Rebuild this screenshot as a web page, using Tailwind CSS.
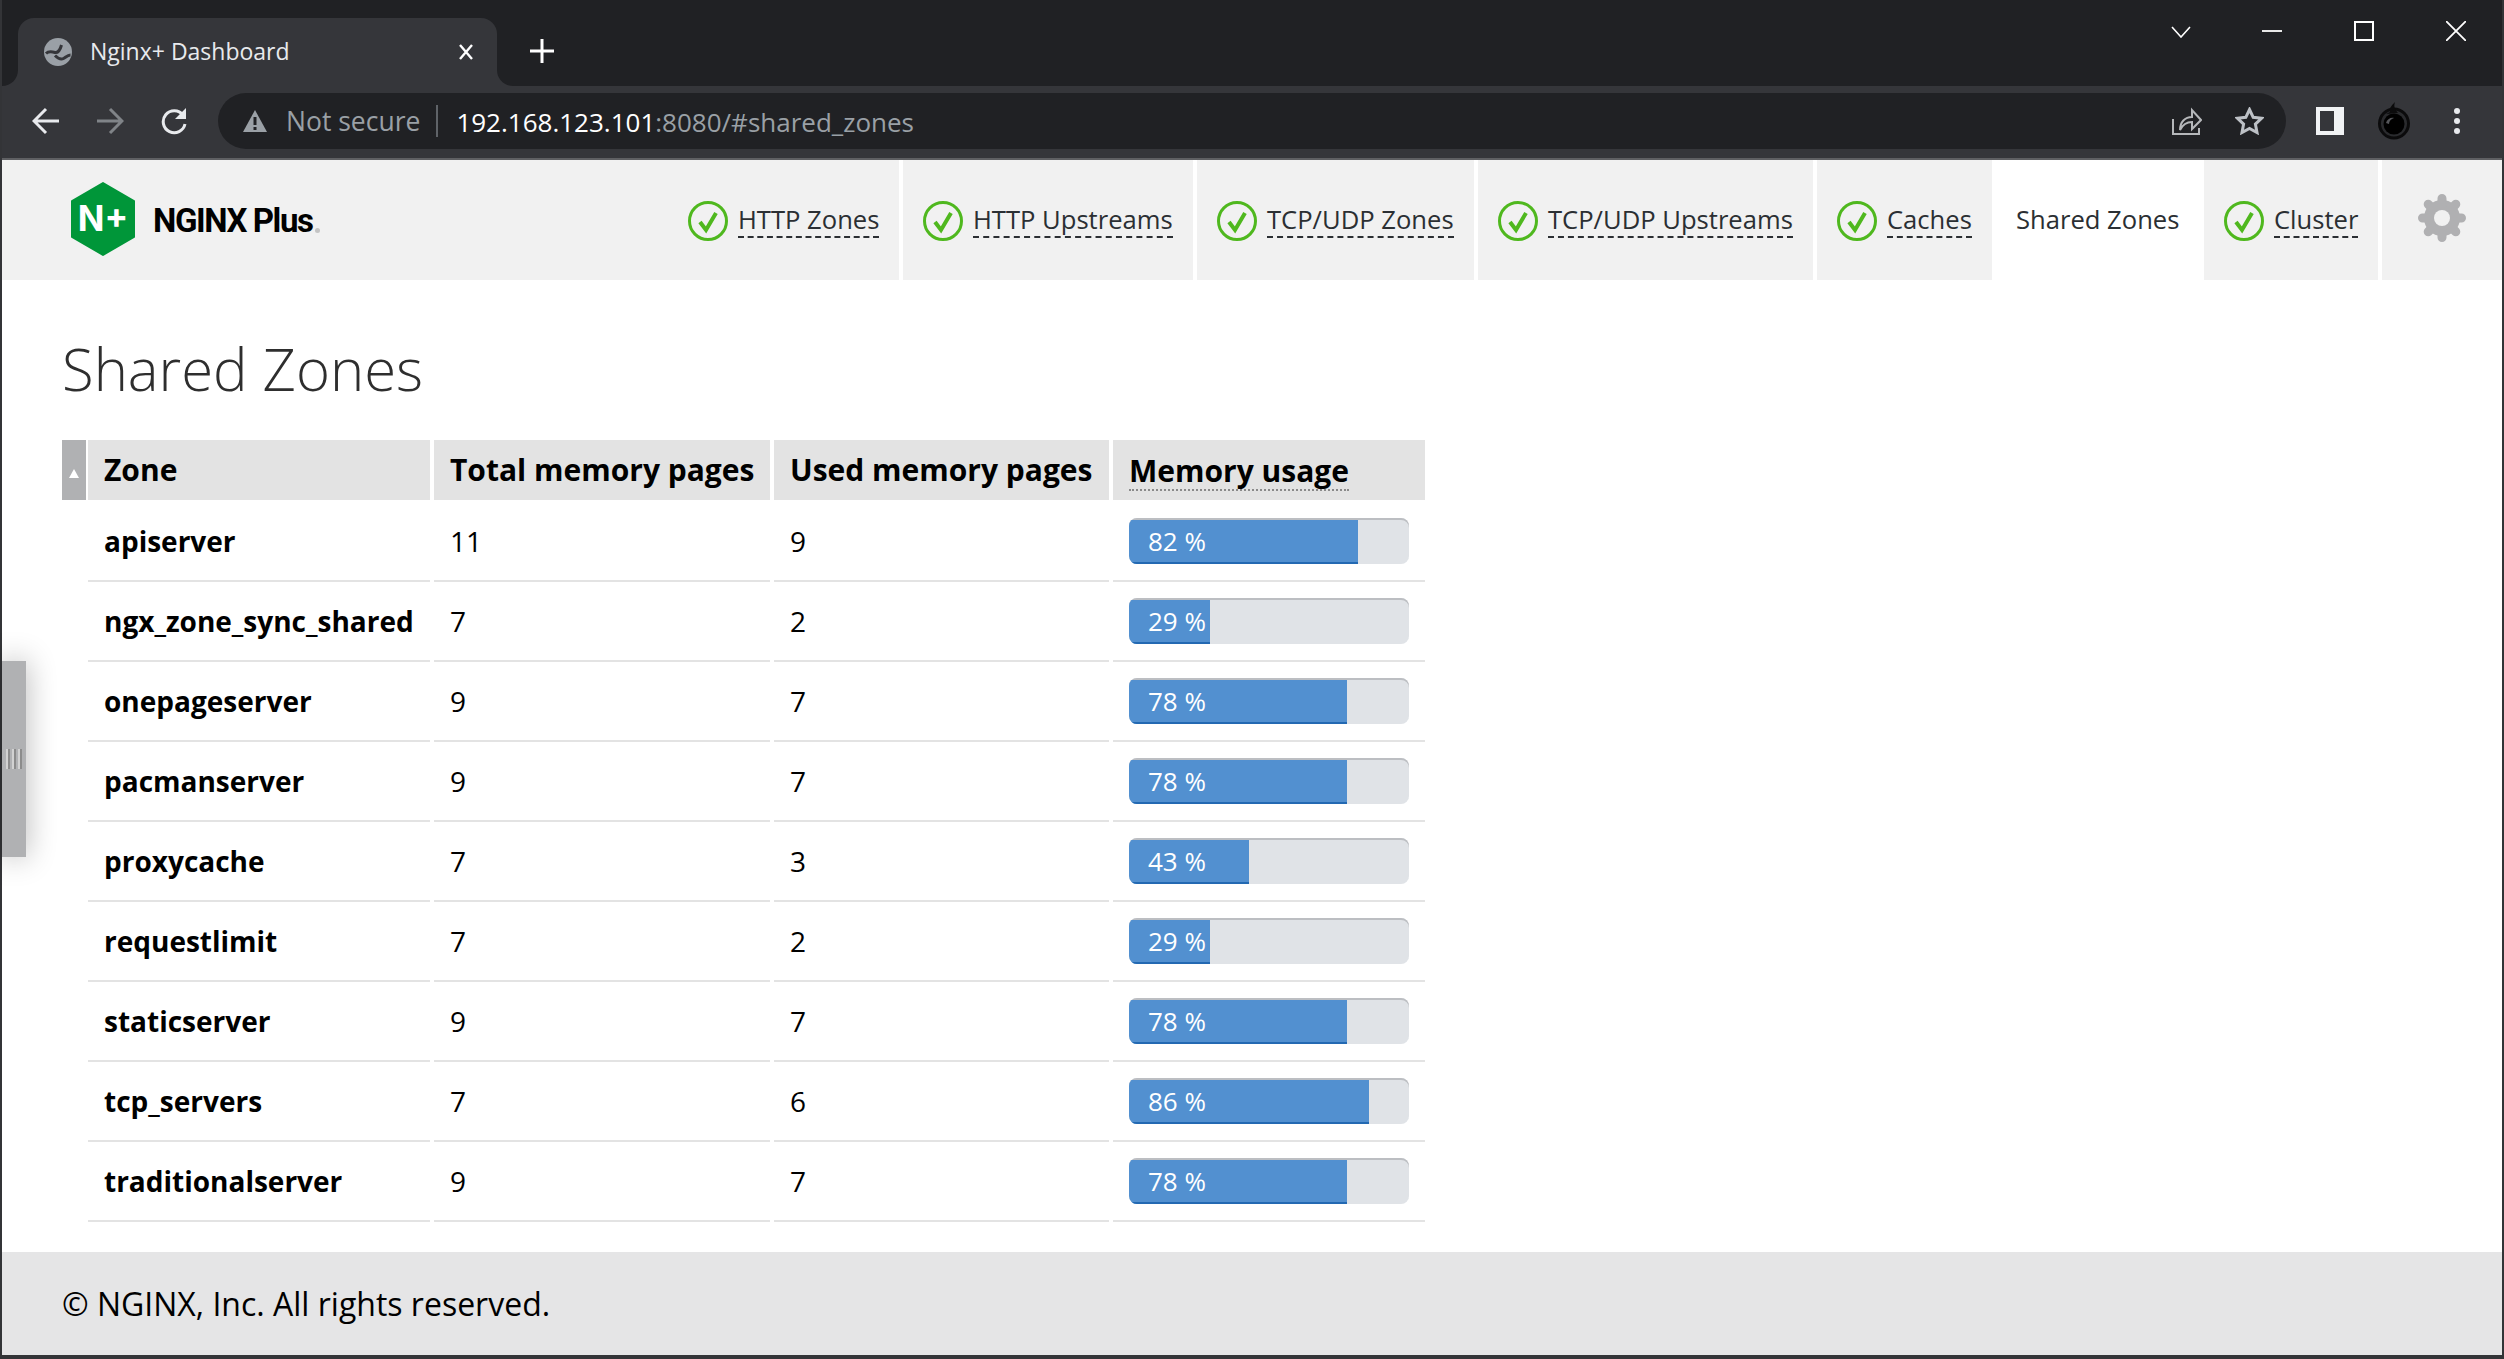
<!DOCTYPE html>
<html lang="en">
<head>
    <meta charset="UTF-8">
    <title>Nginx+ Dashboard</title>
    <script src="https://cdn.jsdelivr.net/npm/@tailwindcss/browser@4"></script>
</head>
<body class="bg-white overflow-hidden font-['Open_Sans',sans-serif]">
<div class="h-[1359px] w-[2504px] flex flex-col border-l-2 border-r-2 border-b-4 border-[#333437] bg-white">

    <!-- tab strip -->
    <div class="h-[86px] shrink-0 bg-[#202124] flex items-end relative">
        <div class="relative ml-4 w-[479px] h-[68px] bg-[#35363a] rounded-t-[16px] flex items-center text-white">
            <svg class="absolute -left-4 bottom-0 w-4 h-4" viewBox="0 0 16 16"><path d="M16 0v16H0C9 16 16 9 16 0z" fill="#35363a"/></svg>
            <svg class="absolute -right-4 bottom-0 w-4 h-4" viewBox="0 0 16 16"><path d="M0 0v16h16C7 16 0 9 0 0z" fill="#35363a"/></svg>
            <svg class="ml-[26px] w-[28px] h-[28px]" viewBox="0 0 28 28">
                <circle cx="14" cy="14" r="14" fill="#9aa0a6"/>
                <path d="M2 15.500c3-3 6-2 9-1 3 .5 5-2 6.500-7.500M11 17.500c3 3 6 4.500 8.500 3 2-1 4-3.500 7-3.500" stroke="#35363a" stroke-width="3" fill="none"/>
            </svg>
            <span class="ml-[18px] pb-[2px] text-[23px] text-[#e8eaed]">Nginx+ Dashboard</span>
            <svg class="ml-auto mr-[23px] w-4 h-4" viewBox="0 0 16 16"><path d="M2 1l12 14M14 1L2 15" stroke="#fff" stroke-width="2.400" fill="none"/></svg>
        </div>
        <svg class="ml-[33px] mb-[23px] w-6 h-6" viewBox="0 0 24 24"><path d="M12 0v24M0 12h24" stroke="#fff" stroke-width="3" fill="none"/></svg>
        <div class="ml-auto self-start pt-[21px] pr-[36px] flex items-start">
            <svg class="mt-[5px] w-5 h-3" viewBox="0 0 20 12"><path d="M1 1l9 10 9-10" stroke="#fff" stroke-width="1.600" fill="none"/></svg>
            <svg class="ml-[71px] w-5 h-5" viewBox="0 0 20 20"><path d="M0 10h20" stroke="#fff" stroke-width="1.800" fill="none"/></svg>
            <svg class="ml-[72px] w-5 h-5" viewBox="0 0 20 20"><rect x="1" y="1" width="18" height="18" stroke="#fff" stroke-width="2" fill="none"/></svg>
            <svg class="ml-[72px] w-5 h-5" viewBox="0 0 20 20"><path d="M0 0l20 20M20 0L0 20" stroke="#fff" stroke-width="1.800" fill="none"/></svg>
        </div>
    </div>

    <!-- toolbar -->
    <div class="h-[74px] shrink-0 bg-[#35363a] border-b-2 border-[#5f6063] flex items-center pl-[30px] pb-[2px]">
        <svg class="w-[28px] h-[28px] mr-[36px]" viewBox="0 0 28 28"><path d="M27 14H3M14 2L2 14l12 12" stroke="#e8eaed" stroke-width="3" fill="none"/></svg>
        <svg class="w-[28px] h-[28px] mr-[36px]" viewBox="0 0 28 28"><path d="M1 14h24M14 2l12 12-12 12" stroke="#808488" stroke-width="3" fill="none"/></svg>
        <svg class="w-[28px] h-[28px] mr-[30px]" viewBox="0 0 28 28"><path d="M23 8a11 11 0 1 0 2 9" stroke="#e8eaed" stroke-width="3" fill="none"/><path d="M26 1v11H15z" fill="#e8eaed"/></svg>
        <div class="w-[2068px] h-[56px] rounded-full bg-[#202124] flex items-center pl-6 pr-[22px]">
            <svg class="w-[26px] h-[24px]" viewBox="0 0 26 24"><path d="M13 1l12 22H1z" fill="#9aa0a6"/><path d="M13 8v8M13 18v3" stroke="#202124" stroke-width="3" fill="none"/></svg>
            <span class="ml-[18px] pt-[2px] text-[26.500px] text-[#9aa0a6]">Not secure</span>
            <span class="ml-[16px] w-[2px] h-[32px] bg-[#5f6368]"></span>
            <span class="ml-[18px] pt-[2px] text-[26px] text-[#9aa0a6]"><span class="text-white">192.168.123.101</span>:8080/#shared_zones</span>
            <svg class="ml-auto w-[30px] h-[28px]" viewBox="0 0 30 28"><path d="M1 12v15h26v-6" stroke="#b5b7ba" stroke-width="2" fill="none"/><path d="M8 23c0-8 5-13 12-13V3l9 10-9 9v-7c-5 0-9 2-12 8z" stroke="#b5b7ba" stroke-width="2" fill="none"/></svg>
            <svg class="ml-[33px] w-[29px] h-[28px]" viewBox="0 0 29 28"><path d="M14.500 2.500l3.700 7.800 8.300 1-6.100 5.800 1.600 8.400-7.500-4.100-7.500 4.100 1.600-8.400-6.100-5.800 8.300-1z" stroke="#bdc1c6" stroke-width="3" fill="none"/></svg>
        </div>
        <svg class="ml-[30px] w-[28px] h-[28px]" viewBox="0 0 28 28"><rect width="28" height="28" fill="#f1f3f4"/><rect x="4" y="4" width="14" height="20" fill="#35363a"/></svg>
        <svg class="ml-[33px] w-[34px] h-[38px]" viewBox="0 0 34 38">
            <circle cx="17" cy="21.500" r="14.500" stroke="#0b0b0c" stroke-width="3" fill="#2a2b2e"/>
            <circle cx="17" cy="22" r="10.500" fill="#000"/>
            <path d="M18 0c-3 3-6 6-5 10l-4 2 12-1c-2-3-5-5-3-11z" fill="#0b0b0c"/>
            <path d="M9 21c1-4 5-6 8-5-3 1-5 3-5 6z" fill="#55565a"/>
        </svg>
        <div class="ml-[43px] flex flex-col gap-1 w-[6px]">
            <span class="w-[6px] h-[6px] rounded-full bg-[#e8eaed]"></span>
            <span class="w-[6px] h-[6px] rounded-full bg-[#e8eaed]"></span>
            <span class="w-[6px] h-[6px] rounded-full bg-[#e8eaed]"></span>
        </div>
    </div>

    <!-- dashboard nav -->
    <nav class="h-[120px] shrink-0 flex text-[25.600px] text-[#2b2f33]">
        <div class="w-[663px] bg-[#f1f1f1] flex items-center pl-[69px] pb-[2px]">
            <svg class="w-[64px] h-[74px]" viewBox="0 0 64 74">
                <path d="M32 1L63 19v36L32 73 1 55V19z" fill="#009639" stroke="#009639" stroke-width="2" stroke-linejoin="round"/>
                <text x="32" y="49" text-anchor="middle" fill="#fff" font-family="Inter, sans-serif" font-weight="700" font-size="35">N+</text>
            </svg>
            <span class="ml-[18px] mt-[3px] text-[33px] leading-none font-bold text-black font-['Roboto',sans-serif] tracking-[-1.4px]">NGINX Plus</span>
            <span class="ml-[2px] mt-[22px] w-[5px] h-[5px] rounded-full bg-[#c4c4c4]"></span>
        </div>

        <a class="w-[234px] mr-1 bg-[#f1f1f1] flex items-center pl-[23px] pt-[2px]">
            <svg class="w-[40px] h-[40px] mr-[10px]" viewBox="0 0 40 40"><circle cx="20" cy="20" r="18.500" stroke="#4fb81e" stroke-width="3" fill="none"/><path d="M12 21l6 8 10-17" stroke="#4fb81e" stroke-width="4" fill="none"/></svg>
            <span class="border-b-2 border-dashed border-[#2b2f33] leading-[32px]">HTTP Zones</span>
        </a>
        <a class="w-[290px] mr-1 bg-[#f1f1f1] flex items-center pl-5 pt-[2px]">
            <svg class="w-[40px] h-[40px] mr-[10px]" viewBox="0 0 40 40"><circle cx="20" cy="20" r="18.500" stroke="#4fb81e" stroke-width="3" fill="none"/><path d="M12 21l6 8 10-17" stroke="#4fb81e" stroke-width="4" fill="none"/></svg>
            <span class="border-b-2 border-dashed border-[#2b2f33] leading-[32px]">HTTP Upstreams</span>
        </a>
        <a class="w-[277px] mr-1 bg-[#f1f1f1] flex items-center pl-5 pt-[2px]">
            <svg class="w-[40px] h-[40px] mr-[10px]" viewBox="0 0 40 40"><circle cx="20" cy="20" r="18.500" stroke="#4fb81e" stroke-width="3" fill="none"/><path d="M12 21l6 8 10-17" stroke="#4fb81e" stroke-width="4" fill="none"/></svg>
            <span class="border-b-2 border-dashed border-[#2b2f33] leading-[32px]">TCP/UDP Zones</span>
        </a>
        <a class="w-[335px] mr-1 bg-[#f1f1f1] flex items-center pl-5 pt-[2px]">
            <svg class="w-[40px] h-[40px] mr-[10px]" viewBox="0 0 40 40"><circle cx="20" cy="20" r="18.500" stroke="#4fb81e" stroke-width="3" fill="none"/><path d="M12 21l6 8 10-17" stroke="#4fb81e" stroke-width="4" fill="none"/></svg>
            <span class="border-b-2 border-dashed border-[#2b2f33] leading-[32px]">TCP/UDP Upstreams</span>
        </a>
        <a class="w-[175px] bg-[#f1f1f1] flex items-center pl-5 pt-[2px]">
            <svg class="w-[40px] h-[40px] mr-[10px]" viewBox="0 0 40 40"><circle cx="20" cy="20" r="18.500" stroke="#4fb81e" stroke-width="3" fill="none"/><path d="M12 21l6 8 10-17" stroke="#4fb81e" stroke-width="4" fill="none"/></svg>
            <span class="border-b-2 border-dashed border-[#2b2f33] leading-[32px]">Caches</span>
        </a>
        <a class="w-[212px] bg-white flex items-center pl-6 pt-[2px]"><span class="leading-[32px] pb-[2px]">Shared Zones</span></a>
        <a class="w-[174px] mr-1 bg-[#f1f1f1] flex items-center pl-5 pt-[2px]">
            <svg class="w-[40px] h-[40px] mr-[10px]" viewBox="0 0 40 40"><circle cx="20" cy="20" r="18.500" stroke="#4fb81e" stroke-width="3" fill="none"/><path d="M12 21l6 8 10-17" stroke="#4fb81e" stroke-width="4" fill="none"/></svg>
            <span class="border-b-2 border-dashed border-[#2b2f33] leading-[32px]">Cluster</span>
        </a>
        <div class="w-[120px] bg-[#f1f1f1] flex items-center justify-center pb-[4px]">
            <svg class="w-[48px] h-[48px]" viewBox="0 0 48 48">
                <circle cx="24" cy="24" r="18" fill="#b0b0b2"/>
                <path d="M24 4.500v39M4.500 24h39M10.200 10.200l27.600 27.600M37.800 10.200L10.200 37.800" stroke="#b0b0b2" stroke-width="9" stroke-linecap="round" fill="none"/>
                <circle cx="24" cy="24" r="8" fill="#f1f1f1"/>
            </svg>
        </div>
    </nav>

    <!-- content -->
    <main class="flex-1 pl-[60px] relative">
        <h1 class="h-[160px] pt-[53px] text-[58px] font-light leading-[72px] text-[#2e2e2e]">Shared Zones</h1>

        <div class="grid grid-cols-[22px_342px_336px_335px_312px] gap-x-1 text-[30px] text-black leading-[38px]">
            <div class="w-[24px] h-[60px] bg-[#b0b1b3] flex items-center justify-center">
                <span class="w-0 h-0 border-x-[5px] border-x-transparent border-b-[9px] border-b-white mt-[6px]"></span>
            </div>
            <div class="h-[60px] bg-[#e3e3e3] pl-4 flex items-center font-bold">Zone</div>
            <div class="h-[60px] bg-[#e3e3e3] pl-4 flex items-center font-bold">Total memory pages</div>
            <div class="h-[60px] bg-[#e3e3e3] pl-4 flex items-center font-bold">Used memory pages</div>
            <div class="h-[60px] bg-[#e3e3e3] pl-4 flex items-center font-bold"><span class="mt-[4px] border-b-2 border-dotted border-[#8a8a8a] leading-[36px]">Memory usage</span></div>
        </div>
        <div id="rows" class="flex flex-col text-[28px] text-black"></div>

        <!-- sidebar drag handle -->
        <div class="absolute left-0 top-[381px] w-[24px] h-[196px] bg-[#b0b1b3] shadow-[0_0_30px_rgba(0,0,0,0.3)] flex items-center justify-center gap-[2px]">
            <span class="w-[2px] h-[20px] bg-[#d2d2d2] shadow-[2px_0_0_#8c8c8c] mr-[2px]"></span>
            <span class="w-[2px] h-[20px] bg-[#d2d2d2] shadow-[2px_0_0_#8c8c8c] mr-[2px]"></span>
            <span class="w-[2px] h-[20px] bg-[#d2d2d2] shadow-[2px_0_0_#8c8c8c] mr-[2px]"></span>
        </div>
    </main>

    <footer class="h-[103px] shrink-0 bg-[#e5e5e6] flex items-center pl-[60px] text-[32px] text-black">© NGINX, Inc. All rights reserved.</footer>
</div>

<script>
    const zones = [
        ["apiserver", 11, 9, 82],
        ["ngx_zone_sync_shared", 7, 2, 29],
        ["onepageserver", 9, 7, 78],
        ["pacmanserver", 9, 7, 78],
        ["proxycache", 7, 3, 43],
        ["requestlimit", 7, 2, 29],
        ["staticserver", 9, 7, 78],
        ["tcp_servers", 7, 6, 86],
        ["traditionalserver", 9, 7, 78]
    ];
    const rows = document.getElementById("rows");
    zones.forEach(([name, total, used, pct], i) => {
        const height = i === 0 ? "h-[82px]" : "h-[80px]";
        const pad = i === 0 ? "pt-[2px]" : "pt-0";
        rows.innerHTML += `
        <div class="grid grid-cols-[22px_342px_336px_335px_312px] gap-x-1 ${height}">
            <div></div>
            <div class="border-b-2 border-[#e3e3e3] pl-4 ${pad} flex items-center font-bold">${name}</div>
            <div class="border-b-2 border-[#e3e3e3] pl-4 ${pad} flex items-center">${total}</div>
            <div class="border-b-2 border-[#e3e3e3] pl-4 ${pad} flex items-center">${used}</div>
            <div class="border-b-2 border-[#e3e3e3] pl-4 ${pad} flex items-center">
                <div class="w-[280px] h-[46px] rounded-lg bg-[#e0e3e7] overflow-hidden shadow-[inset_0_2px_0_#bcbec2]">
                    <div class="h-[44px] mt-[2px] bg-[#5290d0] border-b-2 border-[#2369b2] text-white text-[26px] leading-[42px] pl-[19px] whitespace-nowrap" style="width:${Math.floor(pct * 2.8)}px">${pct} %</div>
                </div>
            </div>
        </div>`;
    });
</script>
</body>
</html>
